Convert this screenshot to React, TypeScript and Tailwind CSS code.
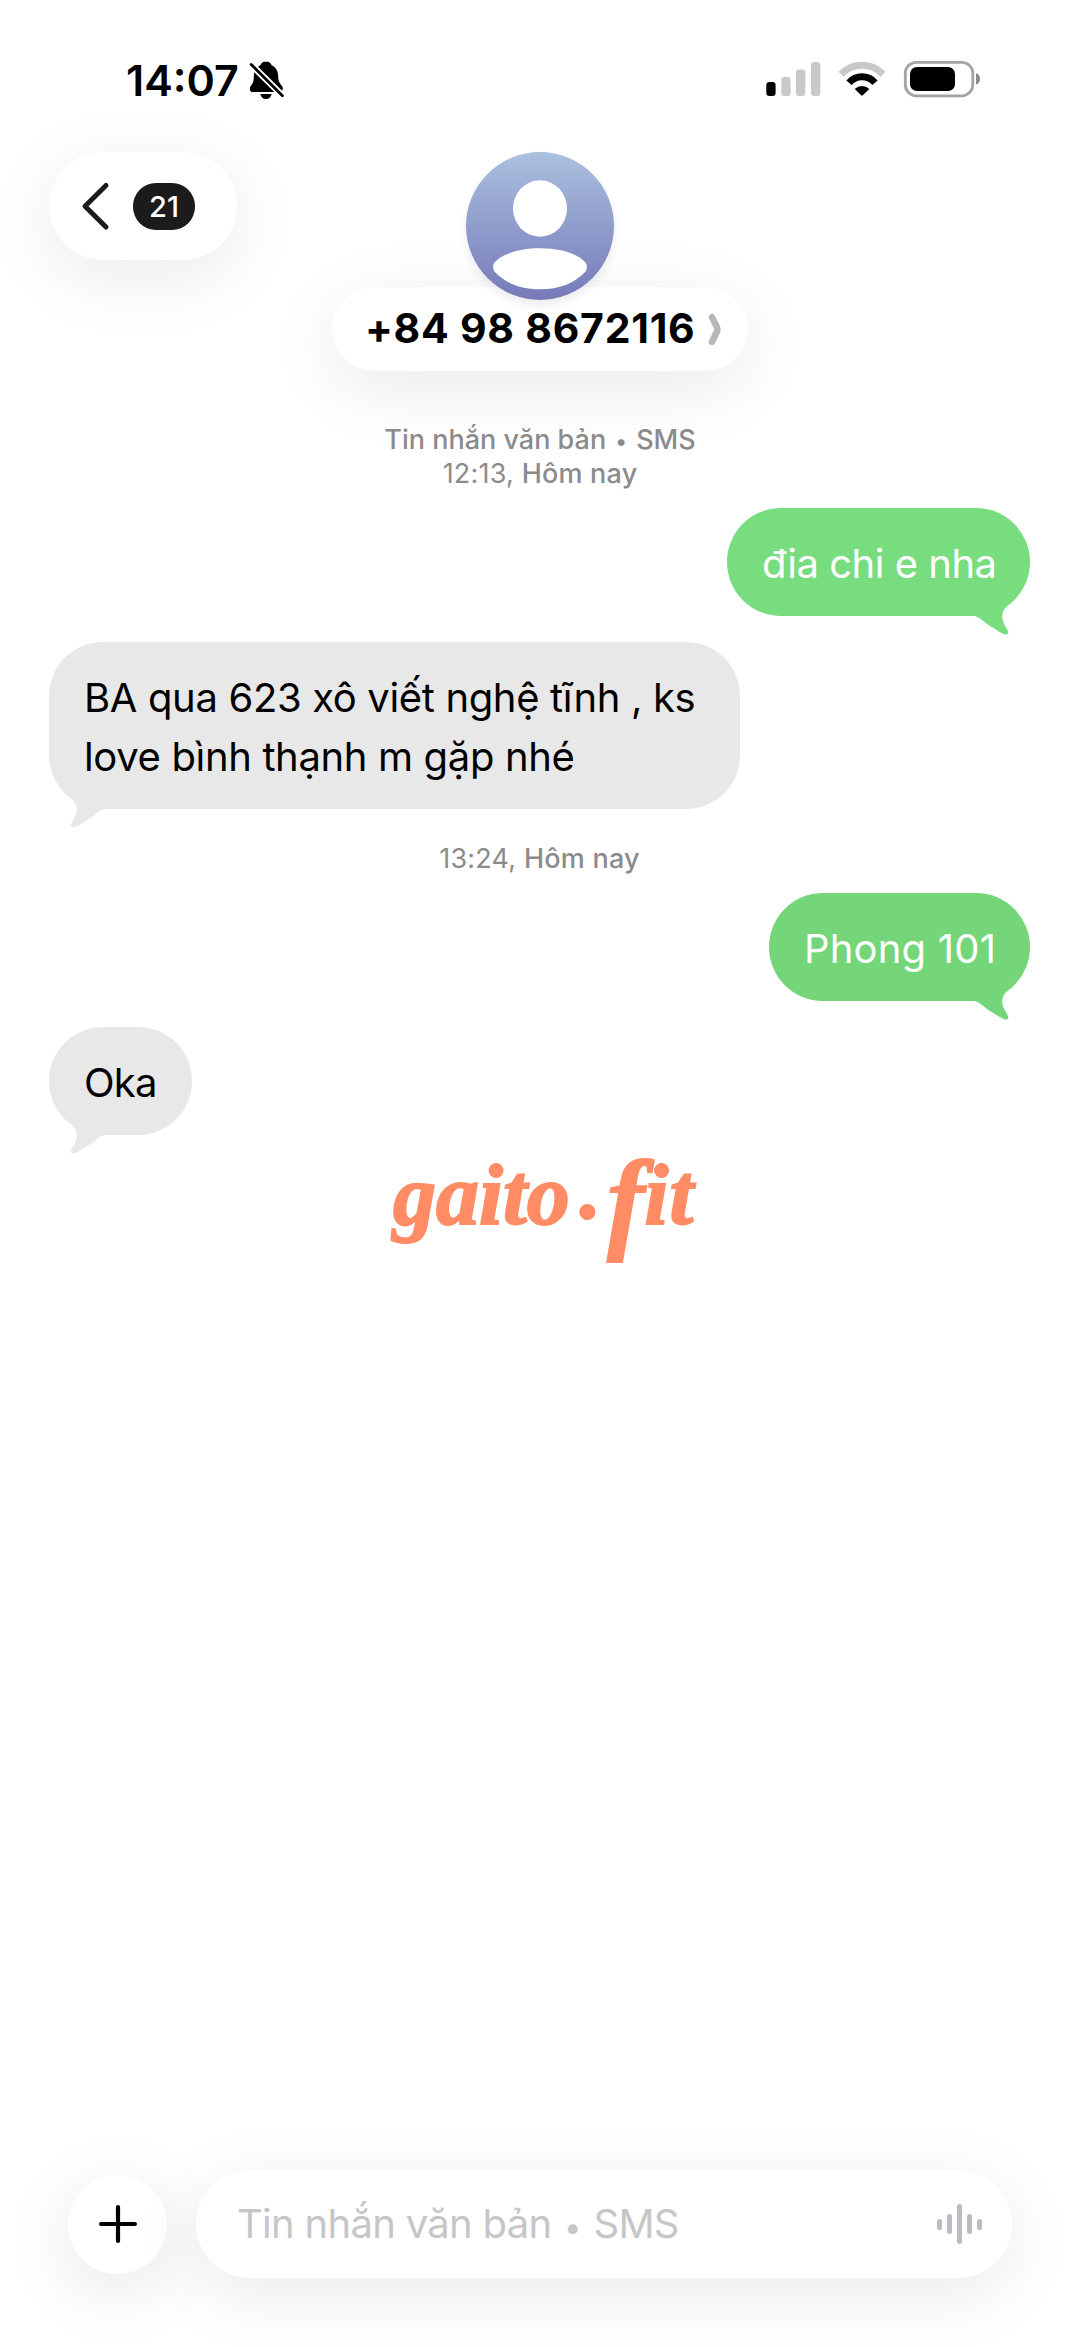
import { ReactNode } from 'react';

const StatusBar = () => (
  <div className="flex h-[152px] items-start justify-between pt-[60px] pl-[126px] pr-[98px]">
    <div className="flex items-start">
      <span className="w-[122px] text-[43px] leading-[40px] font-semibold whitespace-nowrap text-black">14:07</span>
      <svg width="38" height="40" viewBox="248 60 38 40" fill="#000">
        <path d="M266 61.5c-3 0-5 1.6-5.6 3.8-4.4 1.8-6.6 6-6.6 11.2 0 6-1.6 7.4-3.2 9.8-1.4 2.200-1 5.700 1.600 5.700h27.600c2.600 0 3.800-3.500 2.400-5.700-1.600-2.400-4-3.800-4-9.800 0-5.200-2.200-9.400-6.600-11.200-.6-2.200-2.600-3.800-5.600-3.800z" />
        <path d="M260.3 94h11.400c-.6 3-2.900 5-5.700 5s-5.100-2-5.700-5z" />
        <path d="M249 62.500l36 35.500" stroke="#fff" strokeWidth="6.500" />
        <path d="M251.200 64.500l31.200 31.200" stroke="#000" strokeWidth="2.800" strokeLinecap="round" />
      </svg>
    </div>
    <svg width="218" height="40" viewBox="764 60 218 40">
      {/* signal */}
      <rect x="766.3" y="82" width="9.3" height="14" rx="3" fill="#000" />
      <rect x="781.3" y="77" width="9.3" height="19" rx="3" fill="#c9c9c9" />
      <rect x="796" y="69.5" width="9.3" height="26.5" rx="3" fill="#c9c9c9" />
      <rect x="811" y="62" width="9.3" height="34" rx="3" fill="#c9c9c9" />
      {/* wifi */}
      <path d="M841 74.200A29.200 29.200 0 0 1 883 74.200" fill="none" stroke="#c9c9c9" strokeWidth="7" />
      <path d="M849 82.700A17.300 17.300 0 0 1 875 82.700" fill="none" stroke="#000" strokeWidth="7" />
      <path d="M854.700 89A10.500 10.500 0 0 1 869.300 89L862.800 95.300q-.8.700-1.600 0z" fill="#000" />
      {/* battery */}
      <rect x="905.3" y="62.3" width="67.5" height="33.5" rx="11" fill="#fff" stroke="#a4a4a4" strokeWidth="2.8" />
      <rect x="910" y="67" width="45" height="24" rx="7" fill="#000" />
      <path d="M976 73.300c2.600.6 4 3 4 5.600s-1.400 5-4 5.600z" fill="#8a8a8a" />
    </svg>
  </div>
);

const Header = () => (
  <div className="grid h-[219px] grid-cols-[1fr_416px_1fr] items-start">
    <div className="ml-[49px] flex h-[108px] w-[188px] items-center rounded-full bg-white pl-[32px] shadow-[0_16px_70px_rgba(0,0,0,0.085)]">
      <svg width="30" height="50" viewBox="0 0 30 50" fill="none">
        <path d="M25 4.500L4 25.300L25 46" stroke="#1b1b1b" strokeWidth="5" strokeLinecap="round" strokeLinejoin="round" />
      </svg>
      <span className="mt-px ml-[22px] flex h-[47px] w-[62px] items-center justify-center rounded-[23px] bg-[#1b1b1b] text-[29px] font-medium text-white">
        21
      </span>
    </div>
    <div className="flex flex-col items-center">
      <div className="relative z-10 size-[148px] rounded-full bg-linear-to-b from-[#abc0df] to-[#767ab8] shadow-[0_5px_10px_rgba(0,0,0,0.08)]">
        <svg width="148" height="148" viewBox="0 0 148 148" fill="#fff">
          <ellipse cx="74" cy="56.5" rx="27" ry="28.2" />
          <path d="M28.500 110.500C37 101.500 53 96.300 74 96.300S111 101.500 119.500 110.500C121.300 113 121.300 117 119.500 119.500C108.500 131.500 93 137.300 74 137.300S39.500 131.500 28.500 119.500C26.700 117 26.700 113 28.500 110.500Z" />
        </svg>
      </div>
      <div className="-mt-[13px] flex h-[84px] w-full items-center rounded-full bg-white pl-[33px] shadow-[0_16px_70px_rgba(0,0,0,0.09)]">
        <span className="w-[343px] text-[41px] font-bold tracking-[0.75px] whitespace-nowrap text-black">+84 98 8672116</span>
        <svg width="14" height="34" viewBox="0 0 14 34" fill="none">
          <path d="M4 5.200L9 15.500q.9 2 0 4L4 29.800" stroke="#b7b7b7" strokeWidth="6.5" strokeLinecap="round" strokeLinejoin="round" />
        </svg>
      </div>
    </div>
  </div>
);

const Stamp = ({ time, channel }: { time: string; channel?: boolean }) => (
  <div className="text-center text-[27px] leading-[34px] text-[#8b8b8b]">
    {channel && (
      <div className="flex h-[34px] items-baseline justify-center font-medium">
        <span>Tin nhắn văn bản</span>
        <span className="w-[30px] text-center text-[22px]">•</span>
        <span>SMS</span>
      </div>
    )}
    <div className="tracking-[0.2px]">
      {time}, <span className="font-medium">Hôm nay</span>
    </div>
  </div>
);

interface BubbleProps {
  children: ReactNode;
  className: string;
  tail: string;
  mine?: boolean;
}

const Bubble = ({ children, className, tail, mine }: BubbleProps) => (
  <div className={`relative rounded-[54px] pt-[26px] pl-[35px] text-[40px] leading-[59px] whitespace-nowrap ${className}`}>
    {children}
    <svg
      width="48"
      height="46"
      viewBox="0 0 48 46"
      className={`absolute -bottom-[20px] ${tail} ${mine ? 'right-[12px]' : 'left-[12px] -scale-x-100'}`}
    >
      <path d="M4 26C8 26 14 32 20 36C28 41 33 44 35 44.500C38.500 44.800 39 42 37.500 40C33 33 31 27 33 22C35 17 38 15 42 12L24 0L0 10V26Z" />
    </svg>
  </div>
);

const Logo = () => (
  <div className="flex h-[116px] items-baseline font-['Liberation_Serif',serif] text-[86px] leading-[100px] font-bold whitespace-nowrap text-[#ff8c64] italic [-webkit-text-stroke:2px_#ff8c64]">
    <span>gaito</span>
    <span className="ml-[10px] -translate-y-[6px]">.</span>
    <span className="ml-[6px] translate-y-[14px] text-[112px] leading-[100px]">f</span>
    <span className="tracking-[1px]">it</span>
  </div>
);

const voiceBars = [11, 20, 40, 20, 11];

const Composer = () => (
  <div className="mt-auto mb-[69px] flex items-center gap-[29px] pl-[68px]">
    <div className="flex size-[99px] items-center justify-center rounded-full bg-white shadow-[0_16px_70px_rgba(0,0,0,0.1)]">
      <svg width="38" height="38" viewBox="0 0 38 38">
        <path d="M19 2.100V35.900M2.100 19H35.900" stroke="#000" strokeWidth="4.2" strokeLinecap="round" />
      </svg>
    </div>
    <div className="flex h-[108px] w-[816px] items-center justify-between rounded-full bg-white pr-[30px] pl-[41px] shadow-[0_16px_70px_rgba(0,0,0,0.085)]">
      <div className="flex items-baseline text-[40px] tracking-[-0.7px] whitespace-nowrap text-[#c6c6c6]">
        <span>Tin nhắn văn bản</span>
        <span className="w-[42px] text-center text-[31px]">•</span>
        <span>SMS</span>
      </div>
      <div className="flex items-center gap-[5px]">
        {voiceBars.map((h, i) => (
          <span key={i} className="w-[5px] rounded-full bg-[#bbbcc1]" style={{ height: h }} />
        ))}
      </div>
    </div>
  </div>
);

export default function App() {
  return (
    <div className="flex h-[2347px] w-[1080px] flex-col overflow-hidden bg-white font-['Inter','Noto_Sans',sans-serif]">
      <StatusBar />
      <Header />
      <div className="mt-[52px]">
        <Stamp channel time="12:13" />
      </div>
      <div className="flex flex-col pr-[50px] pl-[49px]">
        <Bubble mine tail="fill-[#78dd7e]" className="mt-[17px] h-[108px] w-[303px] self-end bg-[#78dd7e] tracking-[-0.5px] text-white">
          đia chi e nha
        </Bubble>
        <Bubble tail="fill-[#e8e8e8]" className="mt-[26px] h-[167px] w-[691px] self-start bg-[#e8e8e8] tracking-[-0.35px] text-black">
          BA qua 623 xô viết nghệ tĩnh , ks
          <br />
          love bình thạnh m gặp nhé
        </Bubble>
        <div className="mt-[33px]">
          <Stamp time="13:24" />
        </div>
        <Bubble mine tail="fill-[#75d679]" className="mt-[17px] h-[108px] w-[261px] self-end bg-[#75d679] tracking-[0.2px] text-white">
          Phong 101
        </Bubble>
        <Bubble tail="fill-[#e8e8e8]" className="mt-[26px] h-[108px] w-[143px] self-start bg-[#e8e8e8] tracking-[-0.8px] text-black">
          Oka
        </Bubble>
      </div>
      <div className="mt-px pl-[393px]">
        <Logo />
      </div>
      <Composer />
    </div>
  );
}
